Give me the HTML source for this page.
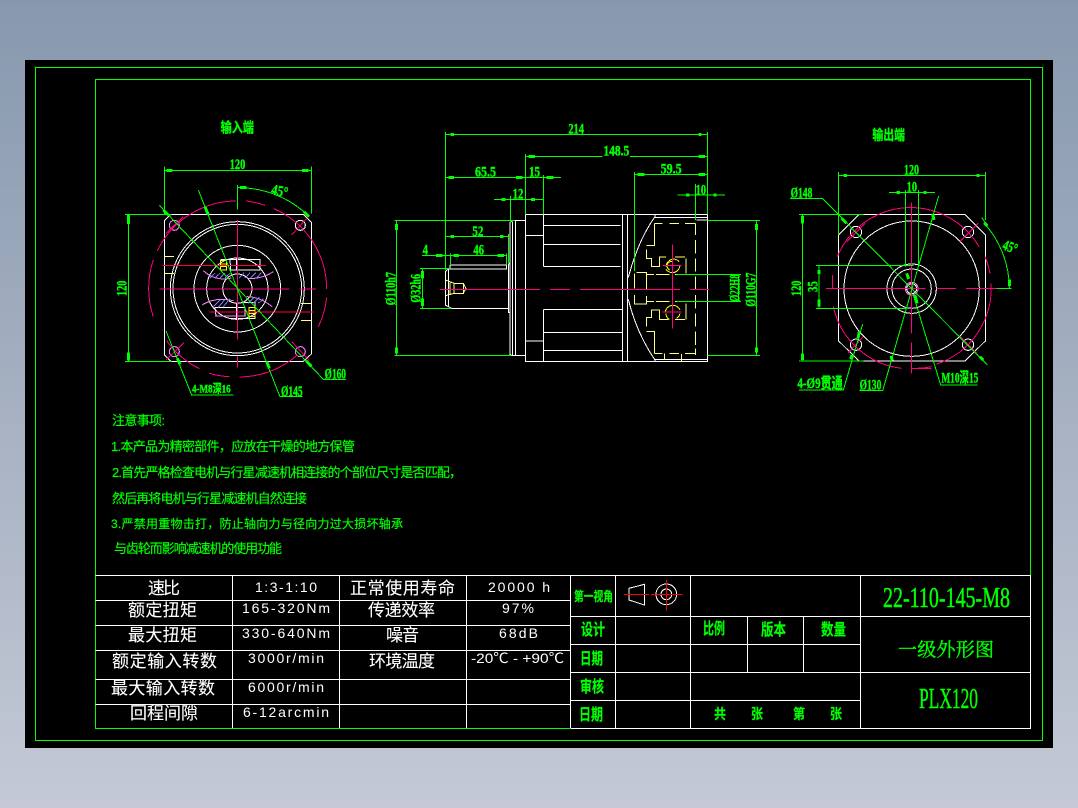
<!DOCTYPE html>
<html lang="zh">
<head>
<meta charset="utf-8">
<title>PLX120</title>
<style>
html,body{margin:0;padding:0;width:1078px;height:808px;overflow:hidden;background:linear-gradient(#8798ae,#c4c9d5)}
svg{position:absolute;left:0;top:0;display:block;shape-rendering:crispEdges}
path,line,circle,rect{fill:none;stroke-width:1;vector-effect:non-scaling-stroke}
.g path,path.g{stroke:#00ff00}
.w path,path.w{stroke:#fff}
.m path,path.m{stroke:#ff0080}
.y path,path.y{stroke:#ffff80}
.r path,path.r{stroke:#ff0000}
path.a{stroke:#00ff00;stroke-width:3}
path.yy,circle.yy{stroke:#ffff00}
path.p{stroke:#ff80ff}
path.b{stroke:#8080ff}
circle.w{stroke:#fff}
circle.p{stroke:#ff80ff}
text.d{fill:#00ff00;stroke:#00ff00;stroke-width:1.3px;font-family:"Liberation Serif",serif;font-size:45px;font-weight:bold}
text.t{fill:#00ff00;stroke:#00ff00;stroke-width:1px;font-family:"Liberation Sans","Noto Sans CJK SC",sans-serif;font-size:42px;font-weight:bold}
text.n{fill:#00ff00;stroke:#00ff00;stroke-width:.2px;font-family:"Liberation Sans","WenQuanYi Zen Hei","Noto Sans CJK SC",sans-serif;font-size:13px}
text.wc{fill:#fff;stroke:#fff;stroke-width:.1px;font-family:"Liberation Sans","WenQuanYi Zen Hei","Noto Sans CJK SC",sans-serif;font-size:17px}
text.wl{fill:#fff;font-family:"Liberation Sans",sans-serif;font-size:14px}
text.gc{fill:#00ff00;stroke:#00ff00;stroke-width:.2px;font-family:"Liberation Sans","Noto Sans CJK SC",sans-serif;font-size:16px;font-weight:bold}
text.gs{fill:#00ff00;stroke:#00ff00;stroke-width:.5px;font-family:"Liberation Serif",serif;font-size:29px}
</style>
</head>
<body>
<svg width="1078" height="808" viewBox="0 0 1078 808" xmlns="http://www.w3.org/2000/svg">
<rect x="25" y="60" width="1028" height="688" style="fill:#000;stroke:none"/>

<!-- frames -->
<g class="g">
<path d="M35.5 67.5H1042.5V740.5H35.5Z"/>
<path d="M570 728.5H95.5V79.5H1030.5V575"/>
</g>

<!-- table lines -->
<g class="w">
<path d="M95.5 575.5H1030.5V728.5H570.5"/>
<path d="M95.5 600.5H570.5M95.5 625.5H570.5M95.5 650.5H570.5M95.5 679.5H570.5M95.5 704.5H570.5"/>
<path d="M232.5 575V728M339.5 575V728M466.5 575V728M570.5 575V728"/>
<path d="M615.5 575V728M690.5 575V728M860.5 575V728M747.5 616V672M803.5 616V672"/>
<path d="M570.5 616.5H1030.5M570.5 644.5H860.5M570.5 672.5H1030.5M570.5 700.5H860.5"/>
</g>

<!-- projection symbol -->
<g transform="translate(565,570) scale(.33333)">
<path class="w" d="M192 55L238 43V105L192 90Z"/>
<circle class="w" cx="304" cy="73" r="31"/>
<circle class="w" cx="304" cy="73" r="16"/>
<path class="r" d="M177 73H252M258 73H352M304 30V122"/>
</g>

<!-- LEFT VIEW -->
<g transform="translate(100,100) scale(.33333)">
<g class="w">
<path d="M212 343H610L634 367V762L610 784H212L193 765V362Z"/>
<circle class="w" cx="412" cy="566" r="201"/>
<circle class="w" cx="412" cy="566" r="193"/>
<circle class="w" cx="412" cy="566" r="130"/>
<circle class="w" cx="412" cy="566" r="92"/>
<circle class="w" cx="412" cy="566" r="44"/>
<path d="M390 478H480V510H392ZM362 478H415M410 472V510M345 622H435V648H348ZM390 655H435M410 610V655M432 608H465V656H432"/>
</g>
<circle class="p" cx="223" cy="376" r="15"/>
<circle class="w" cx="601" cy="376" r="15"/>
<circle class="p" cx="223" cy="755" r="15"/>
<circle class="p" cx="601" cy="755" r="15"/>
<path class="y" d="M193 469H222M193 520H222M603 610H634M603 661H634"/>
<path class="p" d="M310 512Q345 545 395 534M445 535Q485 538 520 515M306 615Q345 590 400 602M440 590Q480 590 516 620M345 648H435"/>
<path class="b" d="M330 534L345 520M345 534L360 520M360 534L375 520M375 534L390 520M418 534L432 518M435 534L450 518M452 534L468 518M470 534L484 518M340 620L360 600M355 622L375 598M370 620L390 596M445 610L462 592M460 610L478 592M475 610L490 596"/>
<path class="yy" d="M362 482H380V510H362ZM362 492H380M362 500H380M447 622H465V650H447ZM447 632H465M447 640H465"/>
<g class="m">
<path d="M188 496H498" style="stroke:#ff0040"/>
<path d="M328 636H640" style="stroke:#ff0040"/>
<path d="M178 567H567M598 567H648M412 300V328M412 360V718M412 768V802"/>
<path d="M172 452A264 264 0 0 1 408 303M438 303A264 264 0 0 1 495 316M522 326A264 264 0 0 1 680 567M680 592A264 264 0 0 1 655 680M592 765A264 264 0 0 1 418 831M388 830A264 264 0 0 1 328 820M298 806A264 264 0 0 1 200 722M160 650A264 264 0 0 1 160 480"/>
<path d="M198 400L250 350M575 405L625 350M198 780L252 728M575 725L628 782"/>
</g>
<g class="g">
<path d="M193 200V343M634 200V340M193 211H634"/>
<path d="M75 343H215M75 784H215M85 343V784"/>
<path d="M412 255V328M412 263A304 304 0 0 1 628 350"/>
<path d="M178 316L670 838H738M295 270L540 890H608M198 693L275 885H400"/>
</g>
<path class="a" d="M200 211H218M606 211H626M85 345V372M85 758V782M420 263H440M612 335L627 350M190 330L205 345M315 320L325 345M232 775L240 793M500 785L508 805M618 782L634 799"/>
<text class="d" x="389" y="207" textLength="47" lengthAdjust="spacingAndGlyphs">120</text>
<text class="d" transform="translate(80,588) rotate(-90)" textLength="46" lengthAdjust="spacingAndGlyphs">120</text>
<text class="d" transform="translate(512,282) rotate(12)" textLength="50" lengthAdjust="spacingAndGlyphs">45°</text>
<text class="d" x="674" y="836" textLength="64" lengthAdjust="spacingAndGlyphs">Ø160</text>
<text class="d" x="543" y="888" textLength="65" lengthAdjust="spacingAndGlyphs">Ø145</text>
<text class="d" x="276" y="878" textLength="116" lengthAdjust="spacingAndGlyphs" style="font-size:36px;font-family:'Liberation Serif','Noto Sans CJK SC',serif">4-M8深16</text>
<text class="t" x="362" y="97" textLength="100" lengthAdjust="spacingAndGlyphs">输入端</text>
</g>

<!-- CENTER VIEW -->
<g transform="translate(380,110) scale(.33333)">
<g class="w">
<path d="M436 313H983V755H436Z"/>
<path d="M490 313V469M490 598V755M727 313V755M742 313V755"/>
<path d="M490 347H722M490 403H722M490 469H722M490 598H727M490 667H727M490 721H727M436 376H490M436 693H490"/>
<path d="M436 331H407V737H436M407 331H397L390 337V733L397 737H407M397 335V737"/>
<path d="M210 465H380V477H205L196 485V585L205 590L215 595H385V463L390 460M385 595V607H390M205 478V590M210 465V477M380 465V477"/>
<path d="M825 320Q775 390 745 502M745 568Q770 670 825 750"/>
<path d="M825 313V322H983M950 330H983M825 748H983M825 748V755"/>
</g>
<g class="y">
<path d="M823 340H848M868 340H897M915 340H946M823 340V395M823 395V406H800M800 418V445H815V469H838V441H858M885 441H915M918 445V490"/>
<path d="M946 340V375M946 390V430M946 445V485M946 500V540M946 555V595M946 610V650M946 665V705M946 715V735"/>
<path d="M770 487H800V540M764 490V535M764 555V582H800V558M800 493H822M828 493H868M885 493H915M800 574H822M828 574H868M885 574H915"/>
<path d="M823 730H848M868 730H897M915 730H946M823 680V730M823 680V664H800M800 650V622H815V600H838V628H865M885 628H915M918 580V628"/>
<path d="M853 730V750M905 732V755"/>
<path d="M197 510L222 520H250L258 535L250 550H222L197 557M222 520H250V550H222ZM210 518V555"/>
</g>
<path class="yy" d="M858 470A23 23 0 0 1 898 455M900 465A23 23 0 0 1 858 478M870 480A12 12 0 0 1 878 455"/>
<path class="yy" d="M856 606A23 23 0 0 1 900 600M900 610A23 23 0 0 1 890 625M868 628A20 20 0 0 1 858 610"/>
<g class="m">
<path d="M180 538H480M510 538H570M600 538H900M930 538H987M878 403V655M847 467H905M847 606H905"/>
</g>
<g class="g">
<path d="M196 66V480M983 66V313M196 73H983"/>
<path d="M436 132V313M436 139H668M750 139H983"/>
<path d="M763 186V483M763 193H983"/>
<path d="M196 202H543M490 195V313"/>
<path d="M342 268H490M391 258V337"/>
<path d="M893 255H1035M946 222V330"/>
<path d="M196 380H385M385 372V460"/>
<path d="M126 436H380M212 430V465M380 430V465"/>
<path d="M43 331H405M43 737H395M49 331V737"/>
<path d="M120 475H210M120 595H215M128 475V595"/>
<path d="M983 331H1140M983 737H1140M1130 331V737"/>
<path d="M890 493H1083M890 574H1083M1075 493V574"/>
</g>
<path class="a" d="M212 73H222M955 73H965M445 139H465M955 139H975M773 193H793M955 193H975M205 202H222M408 202H428M500 202H520M365 268H376M453 268H465M918 255H928M1000 255H1010M212 380H222M360 380H370M168 436H188M220 436H237M352 436H372M49 342V360M49 712V730M128 483V505M128 565V588M1130 342V360M1130 712V727"/>
<text class="d" x="565" y="71" textLength="47" lengthAdjust="spacingAndGlyphs">214</text>
<text class="d" x="670" y="137" textLength="78" lengthAdjust="spacingAndGlyphs">148.5</text>
<text class="d" x="842" y="191" textLength="63" lengthAdjust="spacingAndGlyphs">59.5</text>
<text class="d" x="285" y="200" textLength="63" lengthAdjust="spacingAndGlyphs">65.5</text>
<text class="d" x="447" y="200" textLength="33" lengthAdjust="spacingAndGlyphs">15</text>
<text class="d" x="398" y="266" textLength="32" lengthAdjust="spacingAndGlyphs">12</text>
<text class="d" x="947" y="254" textLength="31" lengthAdjust="spacingAndGlyphs">10</text>
<text class="d" x="277" y="378" textLength="33" lengthAdjust="spacingAndGlyphs">52</text>
<text class="d" x="128" y="434" textLength="16" lengthAdjust="spacingAndGlyphs">4</text>
<text class="d" x="280" y="434" textLength="32" lengthAdjust="spacingAndGlyphs">46</text>
<text class="d" transform="translate(46,586) rotate(-90)" textLength="100" lengthAdjust="spacingAndGlyphs">Ø110h7</text>
<text class="d" transform="translate(122,578) rotate(-90)" textLength="86" lengthAdjust="spacingAndGlyphs">Ø32h6</text>
<text class="d" transform="translate(1127,590) rotate(-90)" textLength="102" lengthAdjust="spacingAndGlyphs">Ø110G7</text>
<text class="d" transform="translate(1078,575) rotate(-90)" textLength="82" lengthAdjust="spacingAndGlyphs">Ø22H8</text>
</g>

<!-- RIGHT VIEW -->
<g transform="translate(780,110) scale(.33333)">
<g class="w">
<path d="M237 313H555L617 375V692L555 753H237L175 692V375Z"/>
<circle class="w" cx="395" cy="536" r="203"/>
<circle class="w" cx="395" cy="536" r="74"/>
<circle class="w" cx="395" cy="536" r="59"/>
<circle class="w" cx="395" cy="536" r="15"/>
<circle class="w" cx="228" cy="366" r="17"/>
<circle class="w" cx="564" cy="366" r="17"/>
<circle class="w" cx="228" cy="704" r="17"/>
<circle class="w" cx="564" cy="704" r="17"/>
</g>
<circle class="p" cx="395" cy="536" r="19"/>
<g class="m">
<path d="M172 440A238 238 0 0 1 597 410M615 440A238 238 0 0 1 630 490M633 520A238 238 0 0 1 470 762M455 770A238 238 0 0 1 395 775M365 775A238 238 0 0 1 160 590M158 495V535"/>
<path d="M138 536H437M470 536H528M558 536H650M395 278V670M395 698V790M395 775H455"/>
<path d="M200 395L255 340M540 395L595 340M205 728L250 680M540 680L590 730"/>
</g>
<g class="g">
<path d="M175 186V375M617 186V330M175 196H617"/>
<path d="M327 247H465M376 240V470M415 240V470"/>
<path d="M57 313H250M57 753H250M67 313V753"/>
<path d="M108 466H400M108 595H380M117 466V595"/>
<path d="M605 322L620 345M613 340A293 293 0 0 1 688 535M650 535H695"/>
<path d="M30 265H127L622 765"/>
<path d="M482 825H593M482 825L400 555"/>
<path d="M476 258L308 842H238"/>
<path d="M248 642L190 840H57"/>
</g>
<path class="a" d="M191 196H201M589 196H599M350 247H360M430 247H440M67 318V340M67 730V750M117 480V492M117 568V590M185 325L200 340M600 740L610 750M613 338L622 348M688 508V528M458 312L462 330M380 490L386 507M405 555L411 580M333 738L337 752M238 665L234 685M216 735L212 748"/>
<text class="d" x="372" y="193" textLength="45" lengthAdjust="spacingAndGlyphs">120</text>
<text class="d" x="380" y="244" textLength="31" lengthAdjust="spacingAndGlyphs">10</text>
<text class="d" transform="translate(63,558) rotate(-90)" textLength="46" lengthAdjust="spacingAndGlyphs">120</text>
<text class="d" transform="translate(113,546) rotate(-90)" textLength="32" lengthAdjust="spacingAndGlyphs">35</text>
<text class="d" transform="translate(665,417) rotate(20)" textLength="44" lengthAdjust="spacingAndGlyphs">45°</text>
<text class="d" x="32" y="262" textLength="65" lengthAdjust="spacingAndGlyphs">Ø148</text>
<text class="d" x="484" y="818" textLength="111" lengthAdjust="spacingAndGlyphs" style="font-family:'Liberation Serif','Noto Sans CJK SC',serif">M10深15</text>
<text class="d" x="239" y="839" textLength="65" lengthAdjust="spacingAndGlyphs">Ø130</text>
<text class="d" x="52" y="834" textLength="136" lengthAdjust="spacingAndGlyphs" style="font-family:'Liberation Serif','Noto Sans CJK SC',serif">4-Ø9贯通</text>
<text class="t" x="277" y="90" textLength="98" lengthAdjust="spacingAndGlyphs">输出端</text>
</g>

<!-- Notes -->
<text class="n" x="112" y="425" textLength="53" lengthAdjust="spacing">注意事项:</text>
<text class="n" x="111" y="451" textLength="244" lengthAdjust="spacing">1.本产品为精密部件，应放在干燥的地方保管</text>
<text class="n" x="112" y="477" textLength="350" lengthAdjust="spacing">2.首先严格检查电机与行星减速机相连接的个部位尺寸是否匹配，</text>
<text class="n" x="112" y="503" textLength="195" lengthAdjust="spacing">然后再将电机与行星减速机自然连接</text>
<text class="n" x="111" y="528" textLength="292" lengthAdjust="spacing" style="font-size:12px">3.严禁用重物击打，防止轴向力与径向力过大损坏轴承</text>
<text class="n" x="114" y="553" textLength="168" lengthAdjust="spacing">与齿轮而影响减速机的使用功能</text>

<!-- White table text -->
<text class="wc" x="148" y="594" textLength="32">速比</text>
<text class="wl" x="255" y="592" textLength="62">1:3-1:10</text>
<text class="wc" x="350" y="594" textLength="105">正常使用寿命</text>
<text class="wl" x="488" y="592" textLength="62">20000 h</text>
<text class="wc" x="128" y="616" textLength="69">额定扭矩</text>
<text class="wl" x="242" y="613" textLength="88">165-320Nm</text>
<text class="wc" x="368" y="616" textLength="67">传递效率</text>
<text class="wl" x="502" y="613" textLength="32">97%</text>
<text class="wc" x="128" y="641" textLength="69">最大扭矩</text>
<text class="wl" x="242" y="638" textLength="88">330-640Nm</text>
<text class="wc" x="386" y="641" textLength="33">噪音</text>
<text class="wl" x="499" y="638" textLength="39">68dB</text>
<text class="wc" x="112" y="667" textLength="105">额定输入转数</text>
<text class="wl" x="248" y="663" textLength="76">3000r/min</text>
<text class="wc" x="369" y="667" textLength="66">环境温度</text>
<text class="wl" x="471" y="663" textLength="93" lengthAdjust="spacingAndGlyphs" style="font-family:'Liberation Sans','Noto Sans CJK SC',sans-serif">-20℃ - +90℃</text>
<text class="wc" x="111" y="694" textLength="104">最大输入转数</text>
<text class="wl" x="248" y="692" textLength="76">6000r/min</text>
<text class="wc" x="130" y="719" textLength="68">回程间隙</text>
<text class="wl" x="243" y="717" textLength="86">6-12arcmin</text>

<!-- Green title block text -->
<text class="gc" x="574" y="601" textLength="39" lengthAdjust="spacingAndGlyphs" style="font-size:13px">第一视角</text>
<text class="gc" x="581" y="635" textLength="24" lengthAdjust="spacingAndGlyphs">设计</text>
<text class="gc" x="580" y="664" textLength="23" lengthAdjust="spacingAndGlyphs">日期</text>
<text class="gc" x="580" y="692" textLength="24" lengthAdjust="spacingAndGlyphs">审核</text>
<text class="gc" x="579" y="720" textLength="24" lengthAdjust="spacingAndGlyphs">日期</text>
<text class="gc" x="703" y="634" textLength="22" lengthAdjust="spacingAndGlyphs">比例</text>
<text class="gc" x="761" y="635" textLength="25" lengthAdjust="spacingAndGlyphs">版本</text>
<text class="gc" x="821" y="635" textLength="25" lengthAdjust="spacingAndGlyphs">数量</text>
<text class="gc" x="714" y="719" textLength="12" lengthAdjust="spacingAndGlyphs" style="font-size:14px">共</text>
<text class="gc" x="751" y="719" textLength="12" lengthAdjust="spacingAndGlyphs" style="font-size:14px">张</text>
<text class="gc" x="793" y="719" textLength="12" lengthAdjust="spacingAndGlyphs" style="font-size:14px">第</text>
<text class="gc" x="830" y="719" textLength="12" lengthAdjust="spacingAndGlyphs" style="font-size:14px">张</text>
<text class="gs" x="883" y="607" textLength="127" lengthAdjust="spacingAndGlyphs">22-110-145-M8</text>
<text x="898" y="656" textLength="96" lengthAdjust="spacing" style="fill:#00ff00;stroke:#00ff00;stroke-width:.4px;font-family:'Liberation Serif','Noto Serif CJK SC',serif;font-size:19px">一级外形图</text>
<text class="gs" x="919" y="708" textLength="59" lengthAdjust="spacingAndGlyphs">PLX120</text>
</svg>
</body>
</html>
